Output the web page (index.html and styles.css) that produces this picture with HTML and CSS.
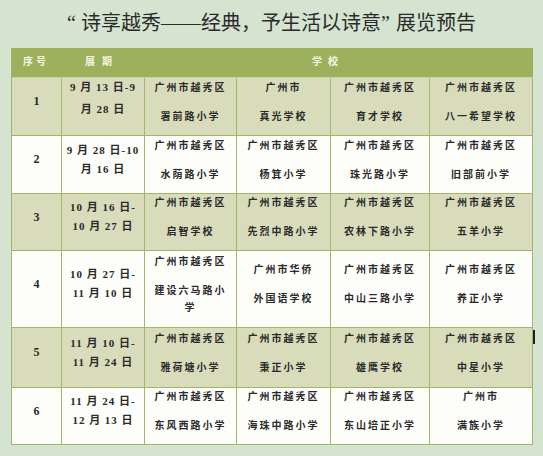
FILE: index.html
```html
<!DOCTYPE html>
<html lang="zh-CN">
<head>
<meta charset="utf-8">
<link rel="stylesheet" href="styles.css">
</head>
<body>
<div class="page">
  <h1 class="title"><span class="ql">“</span>诗享越秀——经典，予生活以诗意<span class="qr">”</span>展览预告</h1>
  <div class="grid">
    <div class="hd hd1">序号</div>
    <div class="hd hd2">展期</div>
    <div class="hd hd3">学校</div>

    <div class="c num alt">1</div>
    <div class="c date alt first"><span>9 月 13 日-9</span><span>月 28 日</span></div>
    <div class="c sch alt"><p>广州市越秀区</p><p>署前路小学</p></div>
    <div class="c sch alt"><p>广州市</p><p>真光学校</p></div>
    <div class="c sch alt"><p>广州市越秀区</p><p>育才学校</p></div>
    <div class="c sch alt"><p>广州市越秀区</p><p>八一希望学校</p></div>

    <div class="c num">2</div>
    <div class="c date"><span>9 月 28 日-10</span><span>月 16 日</span></div>
    <div class="c sch"><p>广州市越秀区</p><p>水荫路小学</p></div>
    <div class="c sch"><p>广州市越秀区</p><p>杨箕小学</p></div>
    <div class="c sch"><p>广州市越秀区</p><p>珠光路小学</p></div>
    <div class="c sch"><p>广州市越秀区</p><p>旧部前小学</p></div>

    <div class="c num alt">3</div>
    <div class="c date alt"><span>10 月 16 日-</span><span>10 月 27 日</span></div>
    <div class="c sch alt"><p>广州市越秀区</p><p>启智学校</p></div>
    <div class="c sch alt"><p>广州市越秀区</p><p>先烈中路小学</p></div>
    <div class="c sch alt"><p>广州市越秀区</p><p>农林下路小学</p></div>
    <div class="c sch alt"><p>广州市越秀区</p><p>五羊小学</p></div>

    <div class="c num">4</div>
    <div class="c date"><span>10 月 27 日-</span><span>11 月 10 日</span></div>
    <div class="c sch"><p>广州市越秀区</p><p>建设六马路小学</p></div>
    <div class="c sch"><p>广州市华侨</p><p>外国语学校</p></div>
    <div class="c sch"><p>广州市越秀区</p><p>中山三路小学</p></div>
    <div class="c sch"><p>广州市越秀区</p><p>养正小学</p></div>

    <div class="c num alt">5</div>
    <div class="c date alt"><span>11 月 10 日-</span><span>11 月 24 日</span></div>
    <div class="c sch alt"><p>广州市越秀区</p><p>雅荷塘小学</p></div>
    <div class="c sch alt"><p>广州市越秀区</p><p>秉正小学</p></div>
    <div class="c sch alt"><p>广州市越秀区</p><p>雄鹰学校</p></div>
    <div class="c sch alt"><p>广州市越秀区</p><p>中星小学</p></div>

    <div class="c num">6</div>
    <div class="c date"><span>11 月 24 日-</span><span>12 月 13 日</span></div>
    <div class="c sch"><p>广州市越秀区</p><p>东风西路小学</p></div>
    <div class="c sch"><p>广州市越秀区</p><p>海珠中路小学</p></div>
    <div class="c sch"><p>广州市越秀区</p><p>东山培正小学</p></div>
    <div class="c sch"><p>广州市</p><p>满族小学</p></div>

    <div class="mark"></div>
  </div>
</div>
</body>
</html>
```

FILE: styles.css
```css
html, body {
  margin: 0;
  padding: 0;
}
body {
  width: 543px;
  height: 456px;
  background: #d5e4d1;
  overflow: hidden;
}
.page {
  padding-top: 11px;
}
.title {
  margin: 0;
  height: 24px;
  line-height: 24px;
  text-align: center;
  font-family: "Liberation Serif", "Noto Sans CJK SC", serif;
  font-weight: 400;
  font-size: 20px;
  color: #2b2b2b;
}
.ql { margin-right: 5px; }
.qr { margin-right: 6px; }
.grid {
  position: relative;
  margin: 13px 0 0 11px;
  width: 522px;
  box-sizing: border-box;
  display: grid;
  grid-template-columns: 50px 83px 92px 94px 99px 103px;
  grid-template-rows: 30px 58px 58px 57px 77px 60px 57px;
  border-left: 1px solid #a3b46b;
  font-family: "Noto Sans CJK SC", sans-serif;
  color: #2a2a2a;
}
.hd {
  background: #9db15c;
  color: #f4f6e8;
  font-weight: 700;
  font-size: 10px;
  display: flex;
  align-items: center;
  padding-bottom: 4px;
  box-sizing: border-box;
  border-bottom: 1px solid #c9d3a4;
}
.hd1 { padding-left: 11px; letter-spacing: 3px; }
.hd2 { padding-left: 23px; letter-spacing: 7px; }
.hd3 { grid-column: span 4; padding-left: 167px; letter-spacing: 6px; }

.c {
  box-sizing: border-box;
  border-right: 1px solid #a3b46b;
  border-bottom: 1px solid #a3b46b;
  background: #fdfdfa;
  display: flex;
  flex-direction: column;
  align-items: center;
  justify-content: center;
  text-align: center;
}
.c.alt {
  background: #d8dcbb;
}
.num {
  font-family: "Liberation Serif", serif;
  font-weight: 700;
  font-size: 12px;
  padding-bottom: 10px;
}
.date {
  font-family: "Liberation Serif", "Noto Sans CJK SC", serif;
  font-weight: 700;
  font-size: 11px;
  letter-spacing: 1px;
  line-height: 19px;
  padding-bottom: 10px;
}
.date.first {
  line-height: 22px;
  padding-bottom: 18px;
}
.date span {
  display: block;
}
.sch {
  padding: 0 6px;
  font-size: 10px;
  font-weight: 700;
  letter-spacing: 2px;
}
.sch p {
  margin: 0 0 12px;
  line-height: 17px;
}
.mark {
  position: absolute;
  left: 521px;
  top: 282px;
  width: 2px;
  height: 14px;
  background: #1e1e1e;
}
```
